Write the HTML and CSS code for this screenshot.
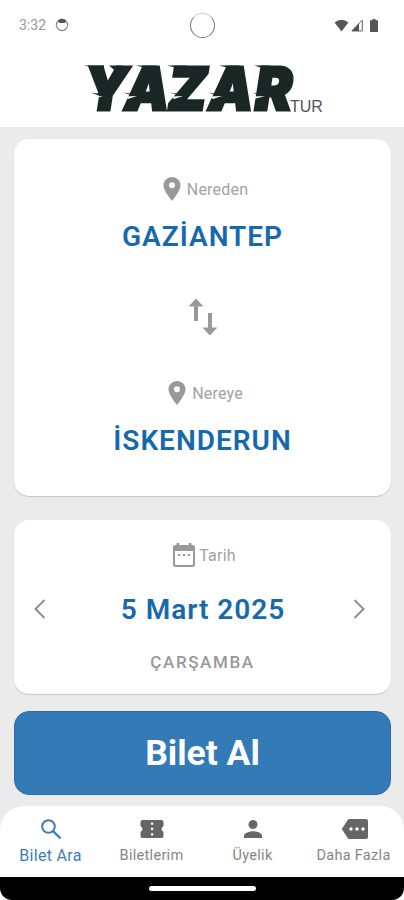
FILE: index.html
```html
<!DOCTYPE html>
<html lang="tr">
<head>
    <meta charset="UTF-8">
    <meta name="viewport" content="width=device-width, initial-scale=1.0">
    <title>Yazar Tur</title>
    <link rel="stylesheet" href="styles.css">
</head>
<body>
    <div class="app">
        <div class="status-bar">
            <div class="status-left">
                <span class="clock">3:32</span>
                <svg width="14" height="14" viewBox="0 0 14 14">
                    <circle cx="7" cy="7" r="5.6" fill="none" stroke="#888" stroke-width="1.2"/>
                    <path d="M3 2.500Q7-1 11 2.500L10 5H4z" fill="#555"/>
                </svg>
            </div>
            <div class="camera"></div>
            <div class="status-right">
                <svg width="15" height="13" viewBox="0 0 15 13"><path d="M.6 3.600Q7.500-2 14.400 3.600L7.500 12.400z" fill="#555"/></svg>
                <svg width="12" height="13" viewBox="0 0 12 13"><path d="M11.300 1V12H.8z" fill="none" stroke="#666"/><path d="M8 4.200V12H.8z" fill="#555"/></svg>
                <svg width="8" height="13" viewBox="0 0 8 13"><path d="M2.500 0h3v1.300H8V13H0V1.300h2.500z" fill="#555"/></svg>
            </div>
        </div>

        <header class="header">
            <svg class="logo" width="244" height="56" viewBox="80 60 244 56">
                <text class="logo-name" transform="scale(.95 1)" x="89 131.500 177 220 268.500" y="109.800">YAZAR</text>
                <!-- speed streaks on the left edge of the letters -->
                <g fill="#1b2725">
                    <path d="M84 65.500h20v6l-9-.5 3-2z"/>
                    <path d="M109 65.500h14l-7 6z"/>
                    <path d="M136 65.500h20v6h-10l2-3z"/>
                    <path d="M167 65.500h20v6h-10l2-3z"/>
                    <path d="M219 65.500h20v6h-10l2-3z"/>
                    <path d="M254 65.500h16v6h-8l2-3z"/>
                    <path d="M91 92.500l6 1 4-3v6z"/>
                    <path d="M123 92.500l7 1 6-4v7z"/>
                    <path d="M169 92.500l8 1 8-4v7z"/>
                    <path d="M208 92.500l7 1 6-4v7z"/>
                    <path d="M252 92.500l6 1 6-4v7z"/>
                </g>
                <g fill="#fff">
                    <path d="M93 96.500l10-.5-9 3z"/>
                    <path d="M125 96.500l12-.5-9 3z"/>
                    <path d="M171 96.500l12-.5-9 3z"/>
                    <path d="M210 96.500l12-.5-9 3z"/>
                    <path d="M253 96.500l12-.5-11 3z"/>
                </g>
                <text class="logo-sub" x="290" y="111.500">TUR</text>
            </svg>
        </header>

        <main class="content">
            <section class="card route">
                <div class="label">
                    <svg width="24" height="28" viewBox="0 0 24 28"><path d="M12 2C7.200 2 3.500 5.700 3.500 10.300 3.500 16.300 12 26 12 26s8.500-9.700 8.500-15.700C20.500 5.700 16.800 2 12 2zm0 11.300a3 3 0 1 1 0-6 3 3 0 0 1 0 6z"/></svg>
                    <span>Nereden</span>
                </div>
                <div class="city">GAZİANTEP</div>
                <svg class="swap" width="48" height="48" viewBox="0 0 48 48"><path d="M17 5.500 9.500 13.500H15V28h4V13.500h5.500zM29 20V34.500h-5.500L30.800 42.500 38.500 34.500H33V20z"/></svg>
                <div class="label">
                    <svg width="24" height="28" viewBox="0 0 24 28"><path d="M12 2C7.200 2 3.500 5.700 3.500 10.300 3.500 16.300 12 26 12 26s8.500-9.700 8.500-15.700C20.500 5.700 16.800 2 12 2zm0 11.300a3 3 0 1 1 0-6 3 3 0 0 1 0 6z"/></svg>
                    <span>Nereye</span>
                </div>
                <div class="city">İSKENDERUN</div>
            </section>

            <section class="card date">
                <div class="label">
                    <svg width="24" height="26" viewBox="0 0 24 26"><path fill-rule="evenodd" d="M4.500 1h2.600v2h9.800V1h2.600v2H20.500Q23 3 23 5.500V22.500Q23 25 20.500 25H3.500Q1 25 1 22.500V5.500Q1 3 3.500 3h1zM3 9V22q0 1 1 1H20q1 0 1-1V9zM6 12h2.200v2H6zm4.900 0h2.200v2h-2.200zm4.900 0H18v2h-2.200z"/></svg>
                    <span>Tarih</span>
                </div>
                <div class="day-picker">
                    <svg width="12" height="20" viewBox="0 0 12 20"><path d="M10.500 1 1.500 10l9 9"/></svg>
                    <span class="day">5 Mart 2025</span>
                    <svg width="12" height="20" viewBox="0 0 12 20"><path d="M1.500 1l9 9-9 9"/></svg>
                </div>
                <div class="weekday">ÇARŞAMBA</div>
            </section>

            <button class="buy-btn">Bilet Al</button>
        </main>

        <nav class="tab-bar">
            <a class="tab active">
                <svg width="24" height="24" viewBox="0 0 24 24"><circle cx="9.500" cy="9.500" r="6.300" fill="none" stroke="currentColor" stroke-width="2"/><path d="M14 14l7.500 7.500" stroke="currentColor" stroke-width="2.400"/></svg>
                <span>Bilet Ara</span>
            </a>
            <a class="tab">
                <svg width="24" height="24" viewBox="0 0 24 24"><path fill-rule="evenodd" d="M2.500 3h19q2 0 2 2v4.200a3 3 0 0 0 0 5.600V19q0 2-2 2h-19q-2 0-2-2v-4.200a3 3 0 0 0 0-5.600V5q0-2 2-2zM11 5.500v2.300h2.200V5.500zm0 5.300v2.300h2.200v-2.300zm0 5.400v2.300h2.200v-2.300z"/></svg>
                <span>Biletlerim</span>
            </a>
            <a class="tab">
                <svg width="24" height="24" viewBox="0 0 24 24"><circle cx="12" cy="7.500" r="4.500"/><path d="M3 21v-2.200c0-3 6-4.600 9-4.600s9 1.600 9 4.600V21z"/></svg>
                <span>Üyelik</span>
            </a>
            <a class="tab">
                <svg width="28" height="24" viewBox="0 0 28 24"><path fill-rule="evenodd" d="M9.500 2H26q2 0 2 2v16q0 2-2 2H9.500q-1.200 0-2-1.200L1.800 12l5.700-8.800Q8.300 2 9.500 2zM11 10.300a1.700 1.700 0 1 0 0 3.400 1.700 1.700 0 0 0 0-3.400zm6 0a1.700 1.700 0 1 0 0 3.400 1.700 1.700 0 0 0 0-3.400zm6 0a1.700 1.700 0 1 0 0 3.400 1.700 1.700 0 0 0 0-3.400z"/></svg>
                <span>Daha Fazla</span>
            </a>
        </nav>

        <div class="gesture-bar"><div class="gesture-pill"></div></div>
    </div>
</body>
</html>
```
FILE: styles.css
```css
* {
    margin: 0;
    padding: 0;
    box-sizing: border-box;
}

body {
    font-family: Roboto, 'Liberation Sans', sans-serif;
    background: #fff;
}

.app {
    width: 404px;
    height: 900px;
    display: flex;
    flex-direction: column;
    background: linear-gradient(#ebebeb 860px, #fff 860px);
    overflow: hidden;
}

.status-bar {
    height: 50px;
    padding: 0 26px 0 19px;
    background: #fff;
    display: grid;
    grid-template-columns: 1fr auto 1fr;
    align-items: center;
}

.status-left,
.status-right {
    display: flex;
    align-items: center;
}

.status-left {
    gap: 9px;
}

.status-right {
    justify-content: flex-end;
    gap: 2px;
}

.status-right svg:last-child {
    margin-left: 5px;
}

.clock {
    font-size: 14px;
    color: #999;
}

.camera {
    width: 25px;
    height: 25px;
    margin-right: -7px;
    border: 1px solid #777;
    border-top-color: #ccc;
    border-radius: 50%;
}

.header {
    height: 77px;
    padding-top: 10px;
    background: #fff;
    display: flex;
    justify-content: center;
    align-items: flex-start;
}

.logo {
    overflow: visible;
}

.logo-name {
    font-family: Inter, sans-serif;
    font-size: 58.5px;
    font-weight: 900;
    font-style: italic;
    fill: #1b2725;
    stroke: #1b2725;
    stroke-width: 3px;
}

.logo-sub {
    font-family: 'Liberation Sans', sans-serif;
    font-size: 16px;
    fill: #555;
}

.content {
    flex: 1;
    padding: 12px 13px 0 14px;
    display: flex;
    flex-direction: column;
}

.card {
    background: #fff;
    border-radius: 15px;
    box-shadow: 0 1px 1px rgba(0, 0, 0, 0.16);
    display: flex;
    flex-direction: column;
    align-items: center;
}

.route {
    height: 357px;
    padding-top: 36px;
}

.label {
    height: 28px;
    padding-left: 3px;
    display: flex;
    align-items: center;
    gap: 3px;
    font-size: 16px;
    letter-spacing: 0.2px;
    color: #a3a3a3;
}

.label svg {
    fill: #999;
}

.city,
.day {
    font-size: 28px;
    font-weight: 600;
    line-height: 36px;
    letter-spacing: 1px;
    color: #1669ad;
}

.city {
    margin-top: 16px;
}

.swap {
    margin: 38px 0;
    fill: #999;
}

.date {
    height: 174px;
    margin-top: 24px;
    padding-top: 21px;
}

.day-picker {
    width: 100%;
    margin-top: 22px;
    padding: 0 26px 0 20px;
    display: flex;
    align-items: center;
    justify-content: space-between;
}

.day-picker svg {
    margin-bottom: 2px;
    fill: none;
    stroke: #8f8f8f;
    stroke-width: 2;
}

.day {
    padding: 1px 0 0 7px;
}

.weekday {
    margin-top: 23px;
    font-size: 17px;
    font-weight: 500;
    line-height: 22px;
    letter-spacing: 1.6px;
    color: #999;
}

.buy-btn {
    height: 84px;
    margin-top: 17px;
    border: 1px solid #2270b3;
    border-radius: 15px;
    background: #337ab7;
    color: #fff;
    font-family: inherit;
    font-size: 35.5px;
    font-weight: 700;
}

.tab-bar {
    height: 71px;
    padding-top: 11px;
    background: #fff;
    border-radius: 24px 24px 0 0;
    display: grid;
    grid-template-columns: repeat(4, 1fr);
}

.tab {
    display: flex;
    flex-direction: column;
    align-items: center;
    gap: 5px;
    font-size: 14.5px;
    line-height: 20px;
    letter-spacing: 0.3px;
    white-space: nowrap;
    color: #858585;
}

.tab svg {
    fill: #666;
}

.tab.active {
    font-size: 16px;
    color: #3c7cba;
}

.gesture-bar {
    height: 23px;
    background: #000;
    border-radius: 0 0 12px 12px;
    display: flex;
    align-items: center;
    justify-content: center;
}

.gesture-pill {
    width: 107px;
    height: 5px;
    border-radius: 3px;
    background: #fff;
}
```
